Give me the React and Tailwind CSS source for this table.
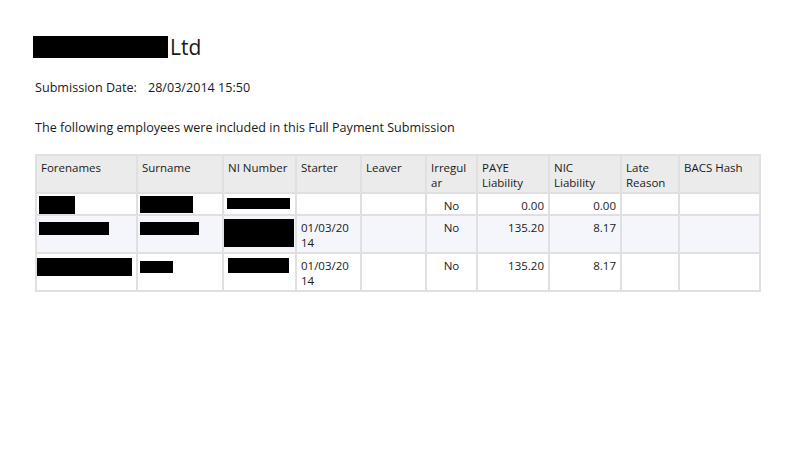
const cols = [101, 86, 73, 65, 65, 51, 72, 72, 58, 81];

const headers = [
  'Forenames',
  'Surname',
  'NI Number',
  'Starter',
  'Leaver',
  'Irregular',
  'PAYE Liability',
  'NIC Liability',
  'Late Reason',
  'BACS Hash',
];

function Redact({ className }) {
  return <span className={`block bg-black ${className}`} />;
}

const rows = [
  {
    bg: 'bg-white',
    h: 'h-[22px]',
    fore: <Redact className="w-[36px] h-[18px] mt-[2px]" />,
    sur: <Redact className="w-[53px] h-[17px] mt-[2px]" />,
    ni: <Redact className="w-[63px] h-[11px] mt-[4px] ml-[1px]" />,
    starter: false,
    paye: '0.00',
    nic: '0.00',
  },
  {
    bg: 'bg-[#f5f6fc]',
    h: 'h-[38px]',
    fore: <Redact className="w-[70px] h-[13px] mt-[6px]" />,
    sur: <Redact className="w-[59px] h-[13px] mt-[6px]" />,
    ni: <Redact className="w-[70px] h-[28px] mt-[3px] -ml-[2px]" />,
    starter: true,
    paye: '135.20',
    nic: '8.17',
  },
  {
    bg: 'bg-white',
    h: 'h-[38px]',
    fore: <Redact className="w-[96px] h-[18px] mt-[4px] -ml-[3px]" />,
    sur: <Redact className="w-[33px] h-[12px] mt-[7px]" />,
    ni: <Redact className="w-[61px] h-[15px] mt-[4px] ml-[2px]" />,
    starter: true,
    paye: '135.20',
    nic: '8.17',
  },
];

export default function App() {
  return (
    <div className="w-[794px] h-[460px] bg-white text-[#1a1a1a] font-['Open_Sans',sans-serif] text-[12.6px] leading-[15px]">
      <div className="pt-[36px] pl-[33px] flex items-center h-[58px]">
        <span className="block w-[135px] h-[22px] bg-black" />
        <span className="text-[21px] leading-[22px] ml-[2px]">Ltd</span>
      </div>

      <div className="pl-[35px] mt-[22px] flex">
        <span>Submission Date:</span>
        <span className="ml-[11px]">28/03/2014 15:50</span>
      </div>

      <p className="pl-[35px] mt-[25px]">
        The following employees were included in this Full Payment Submission
      </p>

      <div className="pl-[35px] mt-[19px] text-[11.5px]">
        <table className="table-fixed border-collapse w-[724px] border-2 border-[#e0e0e0]">
          <colgroup>
            {cols.map((w, i) => (
              <col key={i} style={{ width: w }} />
            ))}
          </colgroup>
          <thead>
            <tr className="bg-[#ebebeb] h-[38px] align-top">
              {headers.map((h) => (
                <th
                  key={h}
                  className="border-2 border-[#e0e0e0] text-left font-normal px-[4px] pt-[4px] break-words"
                >
                  {h}
                </th>
              ))}
            </tr>
          </thead>
          <tbody>
            {rows.map((r, i) => (
              <tr key={i} className={`${r.bg} ${r.h} align-top`}>
                <td className="border-2 border-[#e0e0e0] px-[2px]">{r.fore}</td>
                <td className="border-2 border-[#e0e0e0] px-[2px]">{r.sur}</td>
                <td className="border-2 border-[#e0e0e0] px-[2px]">{r.ni}</td>
                <td className="border-2 border-[#e0e0e0] px-[4px] pt-[4px]">
                  {r.starter && (
                    <>
                      01/03/20
                      <br />
                      14
                    </>
                  )}
                </td>
                <td className="border-2 border-[#e0e0e0]" />
                <td className="border-2 border-[#e0e0e0] text-center pt-[4px]">No</td>
                <td className="border-2 border-[#e0e0e0] text-right px-[4px] pt-[4px]">
                  {r.paye}
                </td>
                <td className="border-2 border-[#e0e0e0] text-right px-[4px] pt-[4px]">
                  {r.nic}
                </td>
                <td className="border-2 border-[#e0e0e0]" />
                <td className="border-2 border-[#e0e0e0]" />
              </tr>
            ))}
          </tbody>
        </table>
      </div>
    </div>
  );
}
